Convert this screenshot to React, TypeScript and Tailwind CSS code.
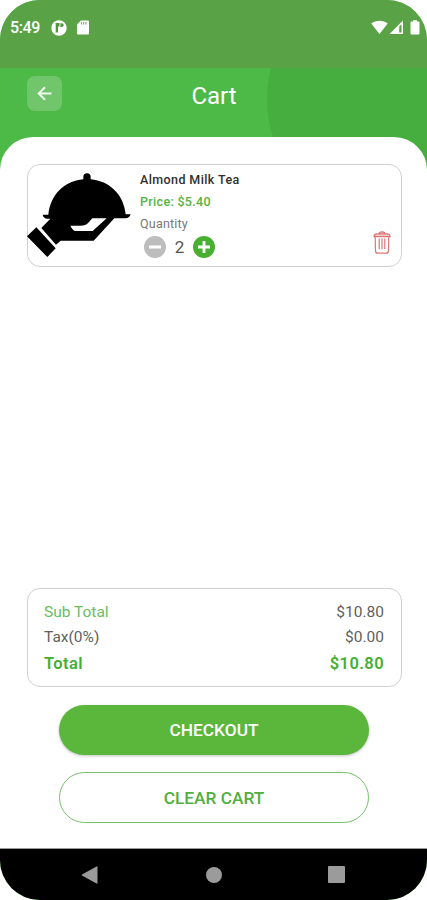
import type { ReactNode } from "react";

function StatusBar() {
  return (
    <div className="flex h-[68px] items-start bg-[#5aa246] pl-[10px] pr-[7px] pt-[18px] text-white">
      <div className="flex h-[19px] items-center">
        <span className="w-[41px] text-[16px] font-medium leading-[19px] tracking-[-0.400px]">5:49</span>
        <svg width="16" height="16" viewBox="0 0 16 16">
          <circle cx="8" cy="8" r="7.7" fill="white" />
          <path d="M4.700 3h3.800v3.600H7v5.800H4.700zM9.400 3.300h1.500a1.800 1.800 0 0 1 0 3.600H9.400z" fill="#4e963c" />
        </svg>
        <svg className="ml-[10px]" width="12" height="15" viewBox="0 0 12 15">
          <path d="M4 0.500h7a1 1 0 0 1 1 1V13.500a1 1 0 0 1-1 1H1a1 1 0 0 1-1-1V4.500z" fill="white" />
          <path d="M4.500 2v2.500M6.700 2v2.500M8.900 2v2.500" stroke="#8dbb80" strokeWidth="1.300" />
        </svg>
      </div>
      <div className="ml-auto flex h-[19px] items-center">
        <svg width="17" height="15" viewBox="0 0 17 15">
          <path d="M0.300 3.600C5-.2 12-.2 16.700 3.600L8.500 14z" fill="white" />
        </svg>
        <svg className="ml-px" width="15" height="15" viewBox="0 0 15 15">
          <path d="M14 0.500V14H0.500z" fill="white" />
          <path d="M10.200 6.500L12.500 4.200V12.500H10.200z" fill="#5aa246" />
        </svg>
        <svg className="ml-[6px]" width="10" height="15" viewBox="0 0 10 15">
          <path d="M3 0.300h4v1.200h1.500a1 1 0 0 1 1 1V13.500a1 1 0 0 1-1 1h-7a1 1 0 0 1-1-1V2.500a1 1 0 0 1 1-1H3z" fill="white" />
        </svg>
      </div>
    </div>
  );
}

function Header() {
  return (
    <header className="relative -mb-[40px] h-[109px] shrink-0 overflow-hidden">
      <div className="absolute left-[267px] top-[-89px] h-[240px] w-[240px] rounded-full bg-[#45ae3f]" />
      <div className="relative grid grid-cols-[35px_1fr_35px] px-[27px] pt-[8px]">
        <button className="flex h-[35px] w-[35px] items-center justify-center rounded-[8px] bg-[#71c56a]">
          <svg width="15" height="15" viewBox="0 0 15 15" fill="none" stroke="#f0faee" strokeWidth="2">
            <path d="M14.500 7.500H1.700M8 1.200L1.700 7.500L8 13.800" />
          </svg>
        </button>
        <h1 className="pl-px pt-[5px] text-center text-[24px] font-normal leading-[30px] text-white">Cart</h1>
      </div>
    </header>
  );
}

function ServingTray() {
  return (
    <svg className="mt-[8px] shrink-0" width="104" height="84" viewBox="21 54 312 252">
      <path d="M190 73v-7a11 11 0 0 1 22 0v7C268 78 311 118 317 178h15q-4 12-16 12h-33L221 257H122L108 269L64 219L91 191H82q-12-1-14-12h17C91 120 132 78 190 73z" fill="black" />
      <path d="M217 190h43L218 228H167q-9-1-16-16h30q17 0 24-9z" fill="white" />
      <path d="M49 217L107 280L82 306L21 244z" fill="black" />
    </svg>
  );
}

function TrashIcon() {
  return (
    <svg width="18" height="23" viewBox="0 0 18 23" fill="none" stroke="#dc7777" strokeWidth="1.200">
      <path d="M6 2.700q0-1.900 3-1.900t3 1.900M1 5.600q0-2.800 3-2.800h10q3 0 3 2.800z" fill="#f3caca" />
      <path d="M2.200 5.600l.3 14.300q.1 2.300 2.300 2.300h8.400q2.200 0 2.300-2.300l.3-14.300" />
      <path d="M6.200 7.500v10.800M9 7.500v10.800M11.800 7.500v10.800" />
    </svg>
  );
}

function RoundButton({ tone, children }: { tone: string; children: ReactNode }) {
  return (
    <button className={tone}>
      <svg className="block" width="22" height="22" viewBox="0 0 22 22" stroke="white" strokeWidth="2.800">
        <circle cx="11" cy="11" r="11" fill="currentColor" stroke="none" />
        {children}
      </svg>
    </button>
  );
}

function CartItem() {
  return (
    <article className="flex h-[103px] w-[375px] rounded-[13px] border border-[#d0d0d0]">
      <div className="-ml-px shrink-0"><ServingTray /></div>
      <div className="ml-[9px] flex flex-col pt-[7px]">
        <h2 className="text-[12.500px] font-medium leading-[16px] tracking-[0.400px] text-[#303030]">Almond Milk Tea</h2>
        <p className="mt-[6px] text-[12.500px] font-medium leading-[16px] tracking-[0.320px] text-[#53b440]">Price: $5.40</p>
        <p className="mt-[6px] text-[12.500px] leading-[16px] tracking-[0.200px] text-[#777]">Quantity</p>
        <div className="ml-[4px] mt-[3px] flex items-center">
          <RoundButton tone="text-[#bdbdbd]"><path d="M5 11h12" /></RoundButton>
          <span className="w-[27px] pt-px text-center text-[17px] leading-[22px] text-[#555]">2</span>
          <RoundButton tone="text-[#48b030]"><path d="M5 11h12M11 5v12" /></RoundButton>
        </div>
      </div>
      <button className="mb-[12px] ml-auto mr-[10px] self-end"><TrashIcon /></button>
    </article>
  );
}

function Totals() {
  return (
    <section className="mt-[321px] h-[99px] w-[375px] rounded-[13px] border border-[#d0d0d0] pl-[16px] pr-[17px] pt-[11px] text-[15.500px] text-[#606060]">
      <div className="flex h-[25px] items-center justify-between"><span className="text-[#6abd60]">Sub Total</span><span>$10.80</span></div>
      <div className="flex h-[26px] items-center justify-between"><span>Tax(0%)</span><span>$0.00</span></div>
      <div className="flex h-[26px] items-center justify-between text-[16.500px] font-semibold tracking-[0.400px] text-[#43af33]"><span>Total</span><span>$10.80</span></div>
    </section>
  );
}

export default function App() {
  return (
    <div className="flex h-[900px] w-[427px] flex-col overflow-hidden bg-white font-['Roboto',sans-serif]">
      <div className="flex h-[900px] flex-col overflow-hidden rounded-[40px] bg-[#4db946]">
        <StatusBar />
        <Header />
        <main className="relative h-[711px] shrink-0 rounded-t-[33px] bg-white pl-[27px] pr-[25px] pt-[27px]">
          <CartItem />
          <Totals />
          <div className="ml-[32px] mt-[18px] flex w-[310px] flex-col gap-[17px] text-[17px] font-medium">
            <button className="h-[50px] rounded-full bg-[#5ab73b] pt-[2px] text-[17.300px] text-white shadow-[0_1px_3px_rgba(0,0,0,0.25)]">CHECKOUT</button>
            <button className="h-[51px] rounded-full border border-[#76bf6b] pt-[2px] text-[17.300px] text-[#50af40]">CLEAR CART</button>
          </div>
        </main>
        <nav className="flex h-[52px] shrink-0 items-center border-t border-[#999] bg-black pl-[81px]">
          <svg width="17" height="18" viewBox="0 0 17 18"><path d="M16.500 1v16q0 1-1 .5L1 9.500q-1-.5 0-1L15.500.5q1-.5 1 .5z" fill="#9b9b9b" /></svg>
          <div className="ml-[108px] h-[16px] w-[16px] rounded-full bg-[#9b9b9b]" />
          <div className="ml-[106px] h-[17px] w-[17px] rounded-[1px] bg-[#9b9b9b]" />
        </nav>
      </div>
    </div>
  );
}
